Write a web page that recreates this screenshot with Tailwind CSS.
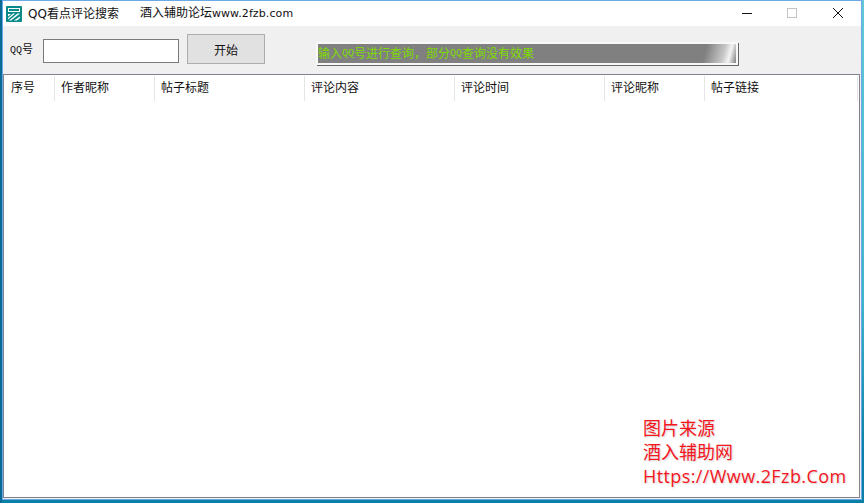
<!DOCTYPE html>
<html>
<head>
<meta charset="utf-8">
<script src="https://cdn.jsdelivr.net/npm/@tailwindcss/browser@4"></script>
</head>
<body class="w-[864px] h-[503px] overflow-hidden flex bg-[#0b7fa6] font-['Liberation_Sans','Noto_Sans_CJK_SC',sans-serif]">
<div class="w-[2px] h-full bg-[#0a6a96] shrink-0"></div>
<div class="w-[860px] h-[500px] shrink-0 border border-[#6aa9e6] bg-[#f0f0f0] flex flex-col">
  <div class="h-[25px] bg-white flex items-center shrink-0 text-[12px] text-[#111] font-['DejaVu_Sans','Noto_Sans_CJK_SC',sans-serif]">
    <svg class="ml-[3px] w-[16px] h-[16px]" viewBox="0 0 16 16">
      <rect width="16" height="16" rx="1" fill="#0b8a8a"/>
      <rect x="2.500" y="2.500" width="11" height="3" fill="#0b8a8a" stroke="#fff"/>
      <path d="M2 8h3L2 10.500zM7 7.500h2L2 13.500v-1.500zM11.500 7.500H14L5 14.500H3zM14 10.500v1.500l-3 2.500H8z" fill="#fff"/>
    </svg>
    <span class="ml-[6px]">QQ看点评论搜索</span>
    <span class="ml-[21px]">酒入辅助论坛<span class="text-[11px] tracking-[0.1px]">www.2fzb.com</span></span>
    <div class="ml-auto flex items-center">
      <svg class="w-[46px] h-[25px]" viewBox="0 0 46 25"><path d="M19 12.500h10" stroke="#111" fill="none"/></svg>
      <svg class="w-[46px] h-[25px]" viewBox="0 0 46 25"><rect x="18.500" y="7.500" width="9" height="9" stroke="#c4c4c4" fill="none"/></svg>
      <svg class="w-[46px] h-[25px]" viewBox="0 0 46 25"><path d="M18 7l10 10M28 7L18 17" stroke="#111" fill="none"/></svg>
    </div>
  </div>
  <div class="h-[48px] flex items-start shrink-0">
    <span class="ml-[7px] mt-[16px] w-[24px] text-[11px] leading-[14px] text-[#111]"><span class="font-['Liberation_Mono'] text-[10px]">QQ</span>号</span>
    <div class="ml-[9px] mt-[13px] w-[136px] h-[24px] bg-white border border-[#7a7a7a]"></div>
    <div class="ml-[8px] mt-[8px] w-[78px] h-[30px] bg-[#e1e1e1] border border-[#adadad] flex items-center justify-center pt-[3px] text-[12px] text-[#111]">开始</div>
    <div class="ml-[51px] mt-[16px] w-[422px] h-[23px] border-2 border-[#f8f8f8] shadow-[1px_1px_0_#666] bg-[linear-gradient(105deg,#808080_0%,#808080_92%,#c8c8c8_96.500%,#f4f4f4_98%,#808080_100%)] flex items-center text-[12px] text-[#7fdc00] overflow-hidden">输入<span class="font-['Liberation_Mono'] text-[10px]">QQ</span>号进行查询，部分<span class="font-['Liberation_Mono'] text-[10px]">QQ</span>查询没有效果</div>
  </div>
  <div class="flex-1 mr-[1px] mb-[1px] bg-white border border-[#82828f] relative">
    <div class="flex h-[25px] mt-[1px] text-[12px] text-[#111]">
      <div class="w-[51px] pl-[7px] border-r border-[#e5e5e5] leading-[25px]">序号</div>
      <div class="w-[100px] pl-[6px] border-r border-[#e5e5e5] leading-[25px]">作者昵称</div>
      <div class="w-[150px] pl-[6px] border-r border-[#e5e5e5] leading-[25px]">帖子标题</div>
      <div class="w-[150px] pl-[6px] border-r border-[#e5e5e5] leading-[25px]">评论内容</div>
      <div class="w-[150px] pl-[6px] border-r border-[#e5e5e5] leading-[25px]">评论时间</div>
      <div class="w-[100px] pl-[6px] border-r border-[#e5e5e5] leading-[25px]">评论昵称</div>
      <div class="w-[153px] pl-[6px] border-r border-[#e5e5e5] leading-[25px]">帖子链接</div>
    </div>
    <div class="absolute left-[639px] top-[341px] text-[18px] leading-[24px] text-[#f5161e] [text-shadow:1px_1px_2px_rgba(0,0,0,0.2)] font-['Open_Sans','Noto_Sans_CJK_SC',sans-serif]">图片来源<br>酒入辅助网<br><span class="tracking-[0.4px]">Https://Www.2Fzb.Com</span></div>
  </div>
</div>
<div class="flex-1 h-full bg-[linear-gradient(180deg,#62c8d8_0%,#3fb4cc_60%,#0b7fa6_90%)]"></div>
</body>
</html>
